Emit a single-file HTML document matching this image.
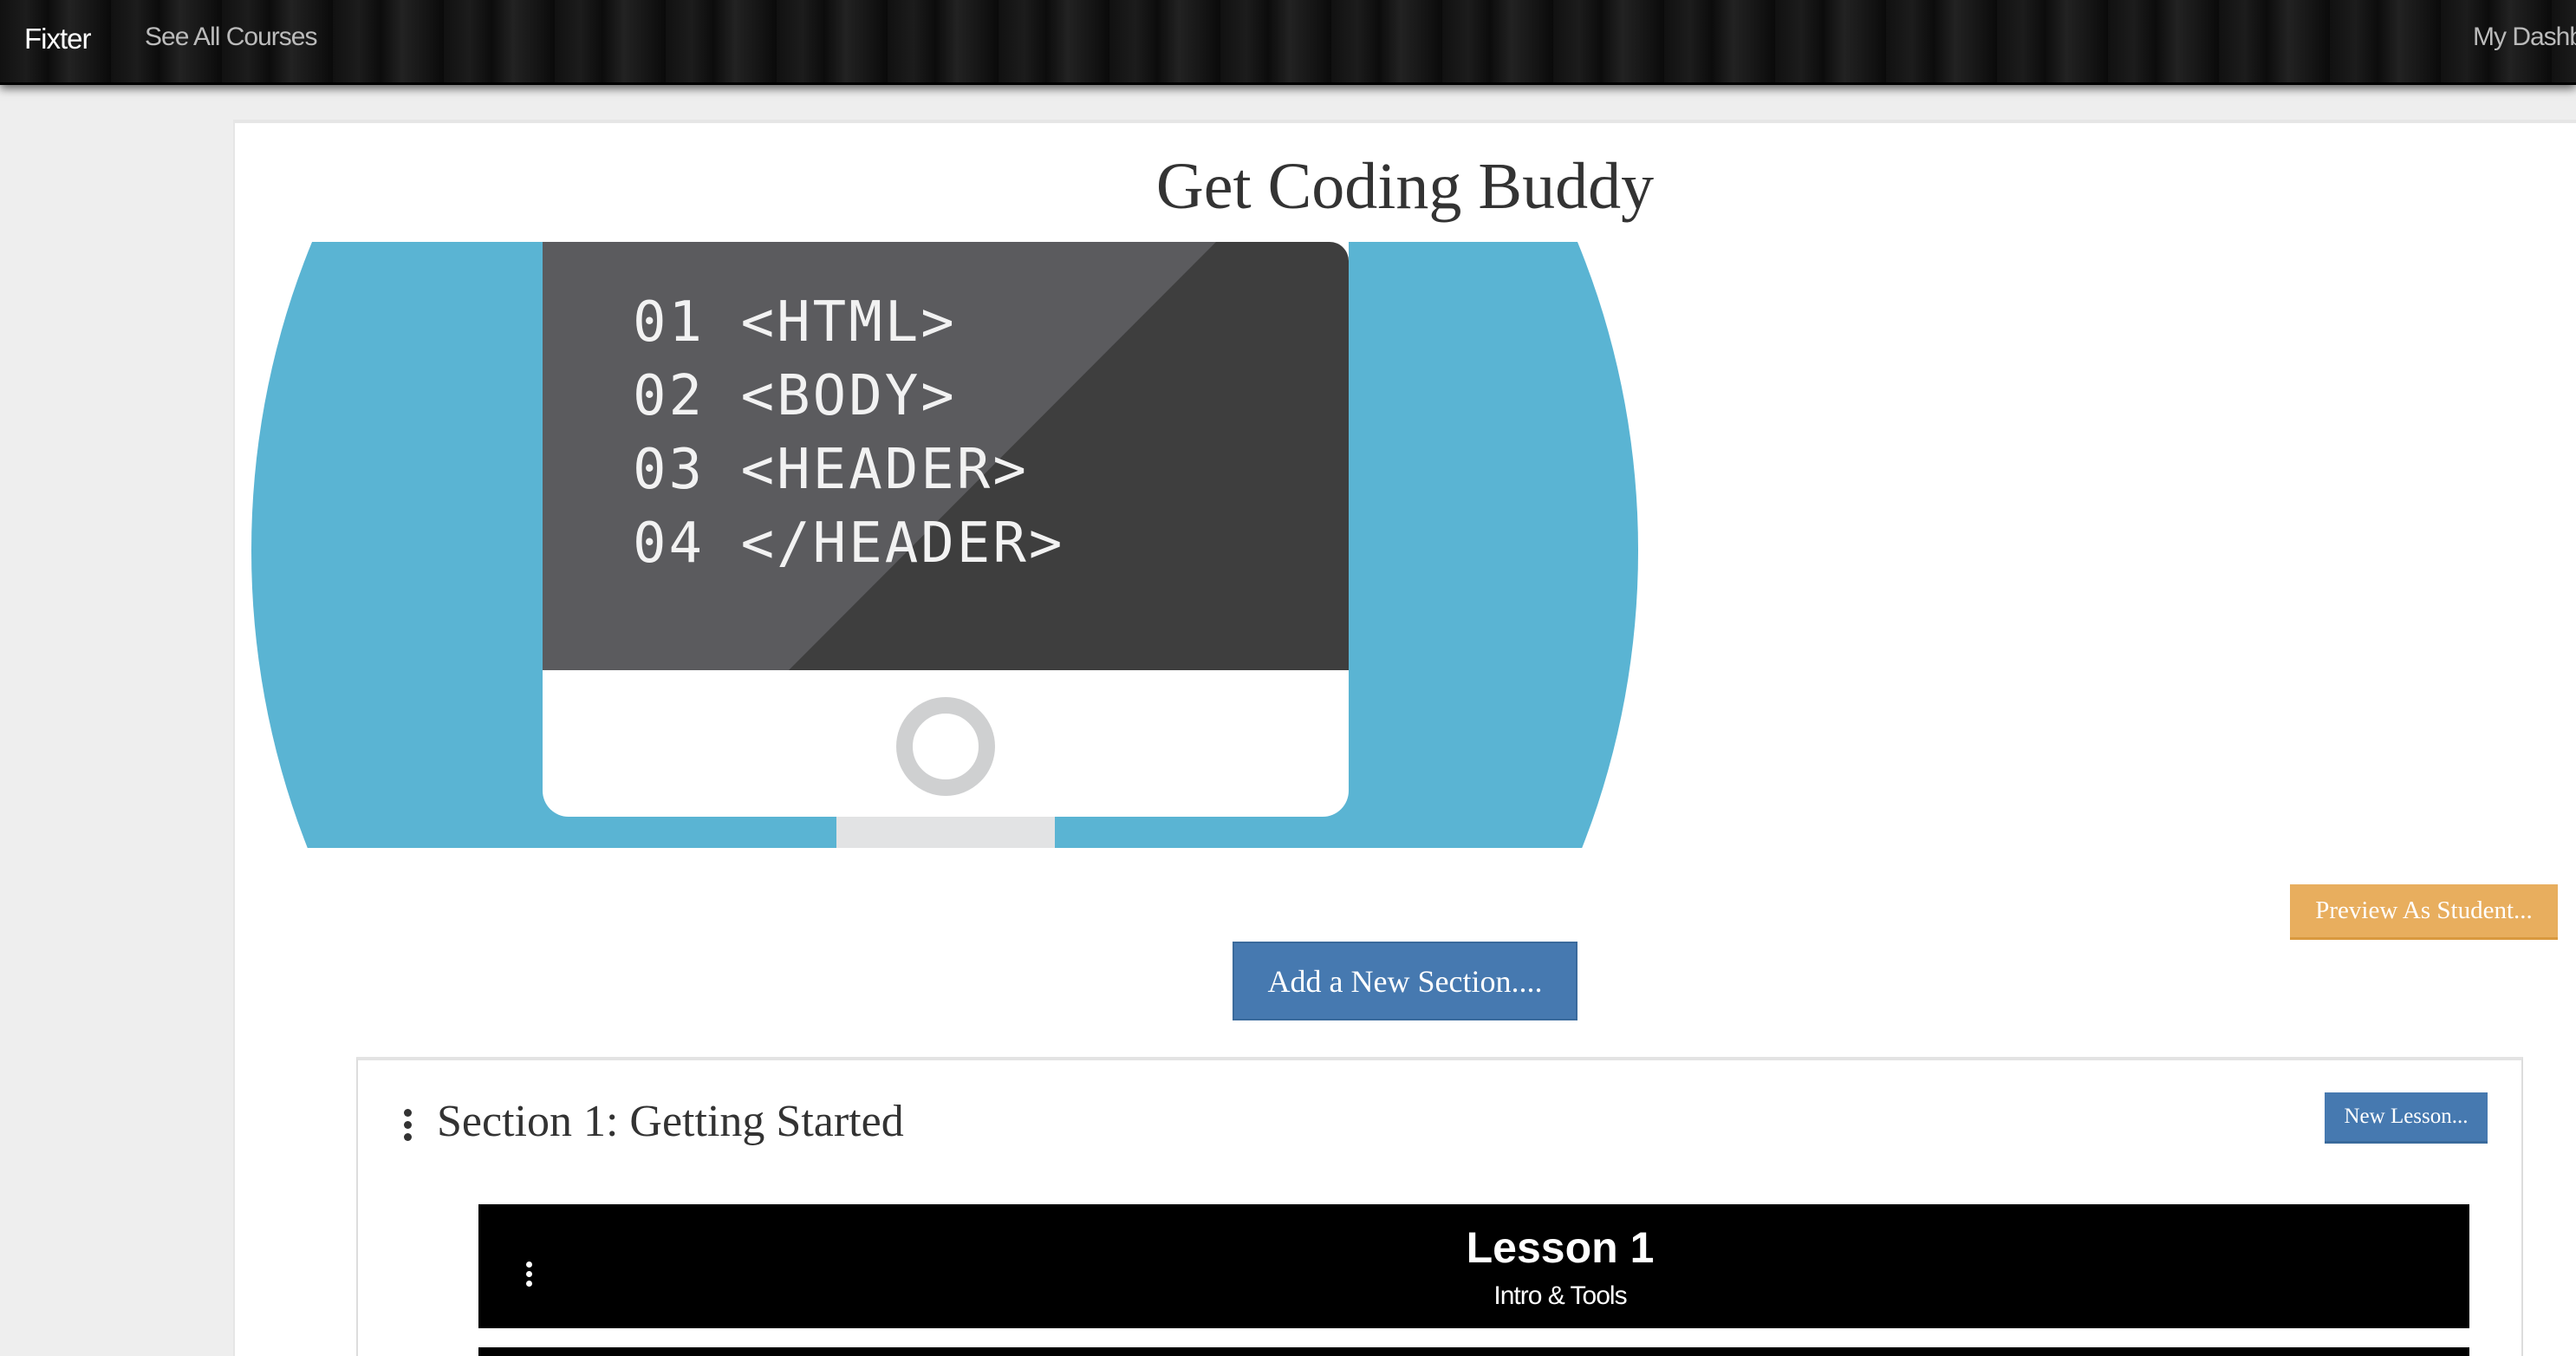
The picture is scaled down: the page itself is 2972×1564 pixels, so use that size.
<!DOCTYPE html>
<html><head><meta charset="utf-8"><style>
*{margin:0;padding:0;box-sizing:border-box}
html,body{width:2972px;height:1564px;overflow:hidden}
body{position:relative;background:#eeeeee;font-family:"Liberation Sans",sans-serif}
.nav{position:absolute;left:0;top:0;width:2972px;height:98px;background:repeating-linear-gradient(90deg,#111 0,#1c1c1c 30px,#0c0c0c 55px,#222 80px,#141414 110px,#0a0a0a 128px);box-shadow:0 4px 10px rgba(0,0,0,.6);border-bottom:3px solid #000;z-index:2}
.nav span{position:absolute;top:26px;font-size:30px;color:#bbb;letter-spacing:-1px;white-space:nowrap}
.card{position:absolute;left:269px;top:138px;width:2703px;height:1426px;background:#fff;border-top:4px solid #e6e6e6;border-left:2px solid #e6e6e6}
.abs{position:absolute}
.serif{font-family:"Liberation Serif",serif}
.btn{position:absolute;color:#fff;font-family:"Liberation Serif",serif;display:flex;align-items:center;justify-content:center;white-space:nowrap}
.code{position:absolute;left:730px;font-family:"DejaVu Sans Mono","Liberation Mono",monospace;font-size:64px;color:#f2f2f2;white-space:pre;letter-spacing:3px}
</style></head><body>
<div class="nav"><span style="left:28px;color:#fff;font-size:33px">Fixter</span><span style="left:167px">See All Courses</span><span style="left:2853px">My Dashboard</span></div>
<div class="card"></div>
<div class="abs serif" style="left:1000px;width:1242px;top:172px;text-align:center;font-size:76px;color:#333">Get Coding Buddy</div>
<div class="abs" style="left:290px;top:279px;width:1600px;height:699px;overflow:hidden">
 <div class="abs" style="left:0;top:-514px;width:1600px;height:1740px;border-radius:50%;background:#5ab4d3"></div>
 <div class="abs" style="left:675px;top:660px;width:252px;height:60px;background:#e2e3e4"></div>
 <div class="abs" style="left:336px;top:0;width:930px;height:663px;border-radius:0 0 30px 30px;background:#fff;overflow:hidden">
  <div class="abs" style="left:0;top:0;width:930px;height:494px;background:#3e3e3e;border-radius:0 22px 0 0"></div>
  <div class="abs" style="left:0;top:0;width:930px;height:494px;background:#5b5b5e;clip-path:polygon(0 0,777px 0,284px 494px,0 494px)"></div>
  <div class="abs" style="left:408px;top:525px;width:114px;height:114px;border-radius:50%;border:19px solid #cfd0d1"></div>
 </div>
</div>
<div class="code" style="top:335px">01 &lt;HTML&gt;</div>
<div class="code" style="top:420px">02 &lt;BODY&gt;</div>
<div class="code" style="top:505px">03 &lt;HEADER&gt;</div>
<div class="code" style="top:590px">04 &lt;/HEADER&gt;</div>
<div class="btn" style="left:2642px;top:1020px;width:309px;height:64px;background:#e8ae5e;border-bottom:3px solid #d9993f;font-size:29px">Preview As Student...</div>
<div class="btn" style="left:1422px;top:1086px;width:398px;height:91px;background:#4679b0;border:2px solid #3a6a9c;font-size:36px">Add a New Section....</div>
<div class="abs" style="left:411px;top:1219px;width:2500px;height:345px;border:2px solid #ddd;border-top:4px solid #e3e3e3;border-bottom:none"></div>
<div class="abs" style="left:466px;top:1279px;width:9px;height:9px;border-radius:50%;background:#333;box-shadow:0 14px 0 #333,0 28px 0 #333"></div>
<div class="abs serif" style="left:504px;top:1264px;font-size:52px;color:#333">Section 1: Getting Started</div>
<div class="btn" style="left:2682px;top:1260px;width:188px;height:59px;background:#4679b0;border-bottom:3px solid #3a6a9c;font-size:25px">New Lesson...</div>
<div class="abs" style="left:552px;top:1389px;width:2297px;height:143px;background:#000"></div>
<div class="abs" style="left:607px;top:1455px;width:7px;height:7px;border-radius:50%;background:#fff;box-shadow:0 11px 0 #fff,0 22px 0 #fff"></div>
<div class="abs" style="left:1500px;width:600px;top:1410px;text-align:center;color:#fff;font-weight:bold;font-size:50px">Lesson 1</div>
<div class="abs" style="left:1500px;width:600px;top:1478px;text-align:center;color:#fff;font-size:30px;letter-spacing:-1px">Intro &amp; Tools</div>
<div class="abs" style="left:552px;top:1554px;width:2297px;height:10px;background:#000"></div>
</body></html>
